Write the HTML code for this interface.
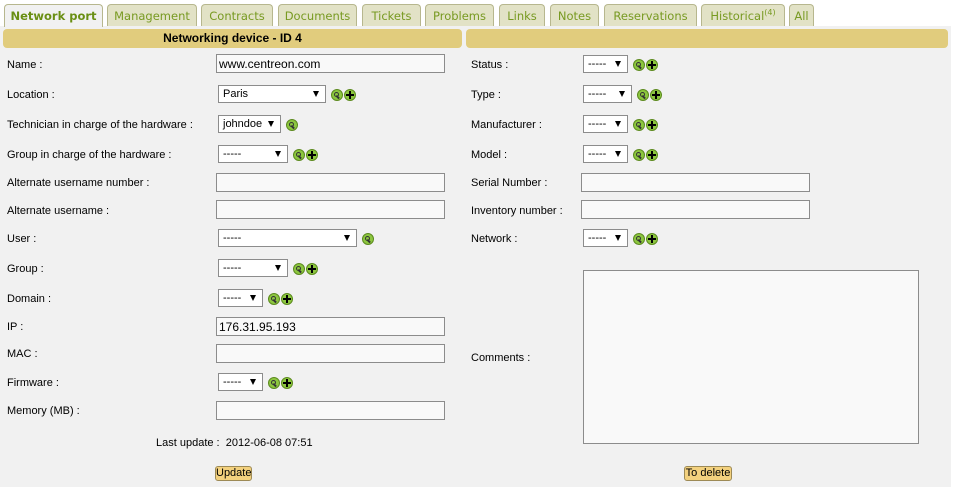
<!DOCTYPE html>
<html><head><meta charset="utf-8"><style>
*{box-sizing:border-box;margin:0;padding:0}
body{width:960px;height:495px;background:#fff;font-family:"Liberation Sans",Arial,sans-serif;font-size:11px;color:#000;position:relative;overflow:hidden}
.tab{position:absolute;top:4px;height:22px;background:#e2e2c6;border:1px solid #b7b78e;border-bottom:none;border-radius:4px 4px 0 0;color:#789a22;font-family:"DejaVu Sans",sans-serif;font-size:11.5px;text-align:center;line-height:22px;white-space:nowrap}
.tab.on{background:#f1f1f1;font-weight:bold;height:23px;color:#6a8f14}
.panel{position:absolute;left:0;top:26px;width:951px;height:461px;background:#f1f1f1}
.hd{position:absolute;top:29px;height:19px;background:#e1cc7d;border-radius:4px;font-weight:bold;font-size:12px;text-align:center;line-height:19px}
.lb{position:absolute;font-size:11px;line-height:14px;margin-top:1px}
.in{position:absolute;height:19px;background:#f9f9f9;border:1px solid #8c8c8c;font-size:12px;line-height:18px;padding-left:2px}
.sel{position:absolute;height:18px;background:#fff;border:1px solid #8c8c8c;font-size:11px;line-height:17px;padding-left:4px}
.sel:after{content:"";position:absolute;right:6px;top:5px;border-left:3px solid transparent;border-right:3px solid transparent;border-top:6px solid #000}
.ic{position:absolute;width:12px;height:12px;border-radius:50%;background:#8cc63f;border:1px solid #5c8a1e}
.ic.m:after{content:"";position:absolute;left:2px;top:2px;width:3px;height:3px;border:1px solid #333;border-radius:50%}
.ic.m:before{content:"";position:absolute;left:5px;top:5px;width:4px;height:1.5px;background:#333;transform:rotate(45deg);transform-origin:0 0}
.ic.p:after{content:"";position:absolute;left:4px;top:1px;width:2px;height:8px;background:#000}
.ic.p:before{content:"";position:absolute;left:1px;top:4px;width:8px;height:2px;background:#000}
.btn{position:absolute;height:15px;background:#f3d17e;border:1px solid #9d8a56;border-radius:3px;font-size:11px;line-height:13px;text-align:center}
</style></head><body>
<div class="panel"></div>
<div class="tab on" style="left:4px;width:99px">Network port</div>
<div class="tab" style="left:107px;width:90px">Management</div>
<div class="tab" style="left:201px;width:72px">Contracts</div>
<div class="tab" style="left:278px;width:79px">Documents</div>
<div class="tab" style="left:362px;width:59px">Tickets</div>
<div class="tab" style="left:425px;width:69px">Problems</div>
<div class="tab" style="left:499px;width:46px">Links</div>
<div class="tab" style="left:550px;width:49px">Notes</div>
<div class="tab" style="left:604px;width:93px">Reservations</div>
<div class="tab" style="left:701px;width:84px">Historical<sup style="font-size:8px;vertical-align:5px;line-height:0">(4)</sup></div>
<div class="tab" style="left:789px;width:25px">All</div>

<div class="hd" style="left:3px;width:459px">Networking device - ID 4</div>
<div class="hd" style="left:466px;width:482px"></div>

<div class="lb" style="left:7px;top:57px">Name :</div>
<div class="in" style="left:216px;top:54px;width:229px">www.centreon.com</div>
<div class="lb" style="left:7px;top:87px">Location :</div>
<div class="sel" style="left:218px;top:85px;width:108px">Paris</div>
<div class="ic m" style="left:331px;top:89px"></div><div class="ic p" style="left:344px;top:89px"></div>
<div class="lb" style="left:7px;top:117px">Technician in charge of the hardware :</div>
<div class="sel" style="left:218px;top:115px;width:63px">johndoe</div>
<div class="ic m" style="left:286px;top:119px"></div>
<div class="lb" style="left:7px;top:147px">Group in charge of the hardware :</div>
<div class="sel" style="left:218px;top:145px;width:70px">-----</div>
<div class="ic m" style="left:293px;top:149px"></div><div class="ic p" style="left:306px;top:149px"></div>
<div class="lb" style="left:7px;top:175px">Alternate username number :</div>
<div class="in" style="left:216px;top:173px;width:229px"></div>
<div class="lb" style="left:7px;top:203px">Alternate username :</div>
<div class="in" style="left:216px;top:200px;width:229px"></div>
<div class="lb" style="left:7px;top:231px">User :</div>
<div class="sel" style="left:218px;top:229px;width:139px">-----</div>
<div class="ic m" style="left:362px;top:233px"></div>
<div class="lb" style="left:7px;top:261px">Group :</div>
<div class="sel" style="left:218px;top:259px;width:70px">-----</div>
<div class="ic m" style="left:293px;top:263px"></div><div class="ic p" style="left:306px;top:263px"></div>
<div class="lb" style="left:7px;top:291px">Domain :</div>
<div class="sel" style="left:218px;top:289px;width:45px">-----</div>
<div class="ic m" style="left:268px;top:293px"></div><div class="ic p" style="left:281px;top:293px"></div>
<div class="lb" style="left:7px;top:319px">IP :</div>
<div class="in" style="left:216px;top:317px;width:229px">176.31.95.193</div>
<div class="lb" style="left:7px;top:346px">MAC :</div>
<div class="in" style="left:216px;top:344px;width:229px"></div>
<div class="lb" style="left:7px;top:375px">Firmware :</div>
<div class="sel" style="left:218px;top:373px;width:45px">-----</div>
<div class="ic m" style="left:268px;top:377px"></div><div class="ic p" style="left:281px;top:377px"></div>
<div class="lb" style="left:7px;top:403px">Memory (MB) :</div>
<div class="in" style="left:216px;top:401px;width:229px"></div>
<div class="lb" style="left:156px;top:435px">Last update :&nbsp; 2012-06-08 07:51</div>
<div class="btn" style="left:215px;top:466px;width:37px">Update</div>

<div class="lb" style="left:471px;top:57px">Status :</div>
<div class="sel" style="left:583px;top:55px;width:45px">-----</div>
<div class="ic m" style="left:633px;top:59px"></div><div class="ic p" style="left:646px;top:59px"></div>
<div class="lb" style="left:471px;top:87px">Type :</div>
<div class="sel" style="left:583px;top:85px;width:49px">-----</div>
<div class="ic m" style="left:637px;top:89px"></div><div class="ic p" style="left:650px;top:89px"></div>
<div class="lb" style="left:471px;top:117px">Manufacturer :</div>
<div class="sel" style="left:583px;top:115px;width:45px">-----</div>
<div class="ic m" style="left:633px;top:119px"></div><div class="ic p" style="left:646px;top:119px"></div>
<div class="lb" style="left:471px;top:147px">Model :</div>
<div class="sel" style="left:583px;top:145px;width:45px">-----</div>
<div class="ic m" style="left:633px;top:149px"></div><div class="ic p" style="left:646px;top:149px"></div>
<div class="lb" style="left:471px;top:175px">Serial Number :</div>
<div class="in" style="left:581px;top:173px;width:229px"></div>
<div class="lb" style="left:471px;top:203px">Inventory number :</div>
<div class="in" style="left:581px;top:200px;width:229px"></div>
<div class="lb" style="left:471px;top:231px">Network :</div>
<div class="sel" style="left:583px;top:229px;width:45px">-----</div>
<div class="ic m" style="left:633px;top:233px"></div><div class="ic p" style="left:646px;top:233px"></div>
<div class="lb" style="left:471px;top:350px">Comments :</div>
<div class="in" style="left:583px;top:270px;width:336px;height:174px"></div>
<div class="btn" style="left:684px;top:466px;width:48px">To delete</div>
</body></html>
